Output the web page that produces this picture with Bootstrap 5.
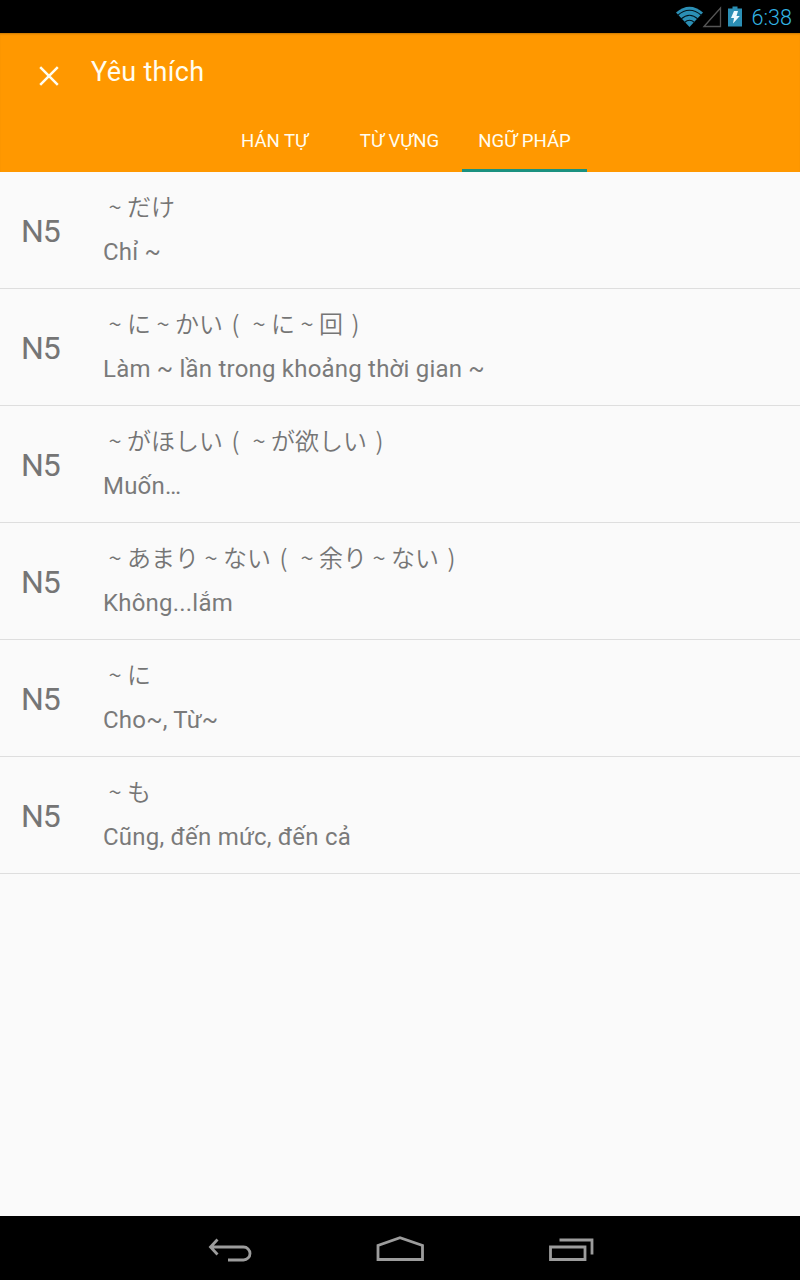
<!DOCTYPE html>
<html lang="vi">
<head>
<meta charset="utf-8">
<meta name="viewport" content="width=device-width, initial-scale=1">
<title>Yêu thích</title>
<link href="https://cdn.jsdelivr.net/npm/bootstrap@5.3.0/dist/css/bootstrap.min.css" rel="stylesheet">
<style>
body{font-family:Roboto,"Noto Sans CJK JP",sans-serif;background:#fafafa;color:#7a7a7a;height:1280px;overflow:hidden}
.status-bar{height:33px;background:#000;color:#33b5e5;padding-right:8px}
.clock{font-size:21.600px;line-height:33px;padding-top:1px;font-weight:300}
.app-bar{height:139px;background:#ff9800;color:#fffdf0;box-shadow:inset 0 2px 2px -1px #c87800}
.title-row{height:75px;padding-left:39px}
.close-icon{margin-top:10px}
.app-title{font-size:27px;line-height:32px;margin:2px 0 0 32px;font-weight:400;letter-spacing:.3px}
.tab-row{height:64px;padding-right:1px}
.tab-row .nav-link{width:125px;height:64px;padding:1px 0 0;color:#fffdf0;font-size:18.6px;line-height:64px;text-align:center;border-bottom:3px solid transparent}
.tab-row .nav-link.active{border-color:#1a9180}
.entry{height:117px;border-bottom:1px solid #dedede}
.level{width:103px;padding:2px 0 0 21px;font-size:32px;line-height:40px;letter-spacing:-1px;color:#757575}
.pattern{font-family:"Noto Sans CJK JP",sans-serif;font-weight:350;font-size:24px;line-height:40px;height:44px;color:#757575}
.half-glyph{display:inline-block;width:24px;text-align:center}
.bracket{padding-left:1px}
.meaning{font-size:24px;line-height:44px;height:44px;letter-spacing:.21px}
.nav-keys{height:64px;background:#000}
</style>
</head>
<body class="d-flex flex-column">
<div class="status-bar d-flex align-items-center justify-content-end">
  <svg width="69" height="24" viewBox="0 0 69 24" class="me-2" style="flex:none">
    <path d="M1 7.500Q14.500-4 28 7.500L14.500 22Z" fill="#2b8fb5"/>
    <path d="M2.500 10.500Q14.500 0 26.500 10.500M6 14Q14.500 6.500 23 14M9.500 17.500Q14.500 13 19.500 17.500" fill="none" stroke="#03151d" stroke-width="1.100"/>
    <path d="M29 21.500L45.500 3V21.500Z" fill="none" stroke="#555" stroke-width="1.300"/>
    <path d="M57.500 1.500h5v2h4.500v18h-14v-18h4.500z" fill="#2b8fb5"/>
    <path d="M59 6h4l-1.500 5h3.300L58 18.500l1-5.500h-3z" fill="#eefaff"/>
  </svg>
  <span class="clock">6:38</span>
</div>
<header class="app-bar">
  <div class="title-row d-flex align-items-center">
    <svg class="close-icon" width="20" height="20" viewBox="0 0 20 20"><path d="M1.200 1.200L18.800 18.800M18.800 1.200L1.200 18.800" stroke="#fffdf0" stroke-width="2.500"/></svg>
    <h1 class="app-title">Yêu thích</h1>
  </div>
  <nav class="nav tab-row justify-content-center">
    <a class="nav-link">HÁN TỰ</a>
    <a class="nav-link">TỪ VỰNG</a>
    <a class="nav-link active">NGỮ PHÁP</a>
  </nav>
</header>
<main class="flex-grow-1">
  <div class="entry d-flex align-items-center"><div class="level">N5</div><div><div class="pattern" lang="ja"><span class="half-glyph">~</span>だけ</div><div class="meaning">Chỉ ~</div></div></div>
  <div class="entry d-flex align-items-center"><div class="level">N5</div><div><div class="pattern" lang="ja"><span class="half-glyph">~</span>に<span class="half-glyph">~</span>かい<span class="half-glyph bracket">(</span><span class="half-glyph">~</span>に<span class="half-glyph">~</span>回<span class="half-glyph bracket">)</span></div><div class="meaning">Làm ~ lần trong khoảng thời gian ~</div></div></div>
  <div class="entry d-flex align-items-center"><div class="level">N5</div><div><div class="pattern" lang="ja"><span class="half-glyph">~</span>がほしい<span class="half-glyph bracket">(</span><span class="half-glyph">~</span>が欲しい<span class="half-glyph bracket">)</span></div><div class="meaning">Muốn…</div></div></div>
  <div class="entry d-flex align-items-center"><div class="level">N5</div><div><div class="pattern" lang="ja"><span class="half-glyph">~</span>あまり<span class="half-glyph">~</span>ない<span class="half-glyph bracket">(</span><span class="half-glyph">~</span>余り<span class="half-glyph">~</span>ない<span class="half-glyph bracket">)</span></div><div class="meaning">Không...lắm</div></div></div>
  <div class="entry d-flex align-items-center"><div class="level">N5</div><div><div class="pattern" lang="ja"><span class="half-glyph">~</span>に</div><div class="meaning">Cho~, Từ~</div></div></div>
  <div class="entry d-flex align-items-center"><div class="level">N5</div><div><div class="pattern" lang="ja"><span class="half-glyph">~</span>も</div><div class="meaning">Cũng, đến mức, đến cả</div></div></div>
</main>
<footer class="nav-keys d-flex justify-content-center">
  <svg width="400" height="64" viewBox="200 1216 400 64" fill="none" stroke="#9c9c9c" stroke-width="2.800">
    <path d="M211 1247H243.500A6.500 6.500 0 0 1 243.500 1260H228M217.500 1239.500L210.500 1247L217.500 1254.500"/>
    <path d="M378 1259.500V1245.500L400 1237.700L422.500 1245.500V1259.500Z"/>
    <path d="M550.500 1247H585V1259.500H550.500ZM559.500 1240H592V1254.500"/>
  </svg>
</footer>
<script src="https://cdn.jsdelivr.net/npm/bootstrap@5.3.0/dist/js/bootstrap.bundle.min.js"></script>
</body>
</html>
